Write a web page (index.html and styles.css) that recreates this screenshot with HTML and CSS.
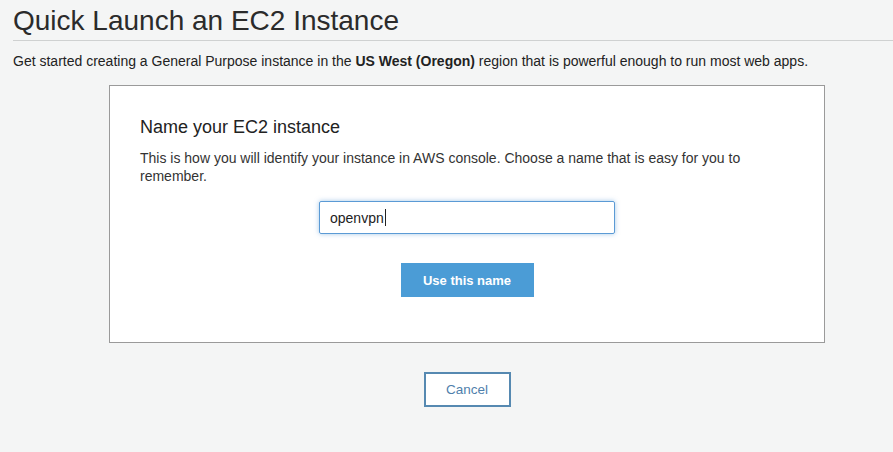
FILE: index.html
```html
<!DOCTYPE html>
<html>
<head>
<meta charset="utf-8">
<link rel="stylesheet" href="styles.css">
</head>
<body>
<div class="page">
  <h1 class="title">Quick Launch an EC2 Instance</h1>
  <p class="intro">Get started creating a General Purpose instance in the <b>US West (Oregon)</b> region that is powerful enough to run most web apps.</p>
  <div class="card">
    <h2 class="card-title">Name your EC2 instance</h2>
    <p class="card-text">This is how you will identify your instance in AWS console. Choose a name that is easy for you to remember.</p>
    <div class="field-row">
      <div class="input">openvpn<span class="caret"></span></div>
    </div>
    <div class="btn-row">
      <button class="btn-primary">Use this name</button>
    </div>
  </div>
  <div class="cancel-row">
    <button class="btn-cancel">Cancel</button>
  </div>
</div>
</body>
</html>
```

FILE: styles.css
```css
html, body {
  margin: 0;
  padding: 0;
  background: #f4f5f5;
  font-family: "Liberation Sans", Arial, sans-serif;
  color: #333;
}
.page {
  width: 893px;
  height: 452px;
  overflow: hidden;
}
.title {
  margin: 0 0 0 13px;
  padding: 5px 0 3px 0;
  font-size: 28px;
  font-weight: normal;
  line-height: 32px;
  color: #2b2b2b;
  border-bottom: 1px solid #cfd1d1;
}
.intro {
  margin: 12px 0 0 13px;
  font-size: 14px;
  line-height: 16px;
  color: #222;
}
.card {
  margin: 16px 0 0 109px;
  width: 716px;
  height: 258px;
  box-sizing: border-box;
  background: #fff;
  border: 1px solid #9a9a9a;
  padding: 31px 30px 0 30px;
}
.card-title {
  margin: 0;
  font-size: 18px;
  font-weight: normal;
  line-height: 20px;
  color: #222;
}
.card-text {
  margin: 12px 0 0 0;
  font-size: 14px;
  line-height: 18px;
  color: #333;
}
.field-row {
  display: flex;
  justify-content: center;
  margin-top: 16px;
}
.input {
  width: 296px;
  height: 33px;
  box-sizing: border-box;
  border: 1px solid #5b9ad5;
  border-radius: 2px;
  box-shadow: 0 0 5px rgba(91, 154, 213, 0.55);
  padding: 0 10px;
  font-size: 14px;
  line-height: 30px;
  color: #222;
  display: flex;
  align-items: center;
}
.caret {
  display: inline-block;
  width: 1px;
  height: 17px;
  background: #222;
  margin-left: 1px;
}
.btn-row {
  display: flex;
  justify-content: center;
  margin-top: 29px;
}
.btn-primary {
  width: 133px;
  height: 34px;
  border: none;
  background: #4b9cd6;
  color: #fff;
  font-family: "Liberation Sans", Arial, sans-serif;
  font-weight: bold;
  font-size: 13px;
  padding: 0;
}
.cancel-row {
  display: flex;
  justify-content: center;
  width: 716px;
  margin: 29px 0 0 109px;
}
.btn-cancel {
  width: 87px;
  height: 35px;
  box-sizing: border-box;
  border: 2px solid #5689b1;
  background: #fff;
  color: #4f7fac;
  font-family: "Liberation Sans", Arial, sans-serif;
  font-size: 13.5px;
  padding: 0;
}
```
